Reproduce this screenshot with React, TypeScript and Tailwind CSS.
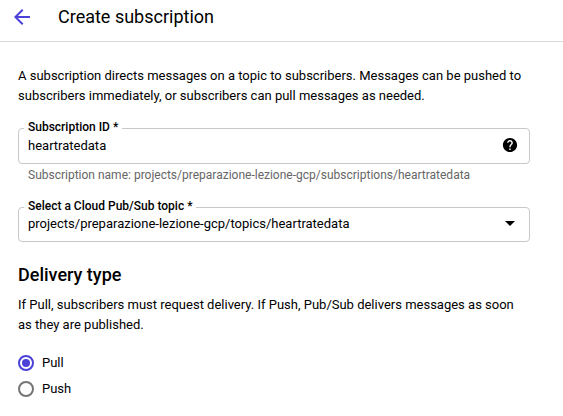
import React from "react";

function Field({ label, value, icon, className }: { label: string; value: string; icon: React.ReactNode; className: string }) {
  return (
    <div className={`relative flex w-[512px] items-start justify-between rounded border border-[#c8c8c8] pl-[9px] ${className}`}>
      <span className="absolute -top-[10px] left-[5px] bg-white px-1 text-[12px] leading-4 font-medium whitespace-nowrap">{label}</span>
      <span className="text-[13px] leading-5 whitespace-nowrap">{value}</span>
      {icon}
    </div>
  );
}

function Radio({ label, checked }: { label: string; checked?: boolean }) {
  return (
    <div className="flex h-[26px] items-center gap-2">
      <span className={`flex size-4 items-center justify-center rounded-full border-2 ${checked ? "border-[#4b40d8]" : "border-[#757575]"}`}>
        {checked && <span className="size-2 rounded-full bg-[#4b40d8]" />}
      </span>
      <span className="text-[13px] leading-5">{label}</span>
    </div>
  );
}

export default function App() {
  return (
    <div className="h-[416px] w-[563px] overflow-hidden bg-white font-['Roboto',sans-serif] text-black">
      <header className="flex h-[42px] items-center border-b border-[#dadada] pb-[7px] pl-[10px]">
        <svg viewBox="0 0 24 24" className="size-6 fill-[#4b40d8]">
          <path d="M20 11H7.83l5.59-5.59L12 4l-8 8 8 8 1.41-1.41L7.83 13H20v-2z" />
        </svg>
        <h1 className="ml-6 text-[18px] leading-6 font-normal">Create subscription</h1>
      </header>
      <main className="pt-6 pl-[18px]">
        <p className="mb-[22px] text-[13px] leading-5 whitespace-nowrap">
          A subscription directs messages on a topic to subscribers. Messages can be pushed to<br />
          subscribers immediately, or subscribers can pull messages as needed.
        </p>
        <Field
          label="Subscription ID *"
          className="h-9 pt-[7px] pr-[10px]"
          value="heartratedata"
          icon={
            <svg viewBox="-0.7 -0.7 25.4 25.4" className="size-[18px] fill-black">
              <path d="M12 2C6.48 2 2 6.48 2 12s4.48 10 10 10 10-4.48 10-10S17.52 2 12 2zm1 17h-2v-2h2v2zm2.07-7.75-.9.92C13.45 12.9 13 13.5 13 15h-2v-.5c0-1.1.45-2.1 1.17-2.83l1.24-1.26c.37-.36.59-.86.59-1.41 0-1.1-.9-2-2-2s-2 .9-2 2H8c0-2.21 1.79-4 4-4s4 1.79 4 4c0 .88-.36 1.68-.93 2.25z" />
            </svg>
          }
        />
        <p className="mt-[3px] mb-6 ml-[10px] text-[12px] leading-4 text-[#666666]">Subscription name: projects/preparazione-lezione-gcp/subscriptions/heartratedata</p>
        <Field
          label="Select a Cloud Pub/Sub topic *"
          className="h-[35px] pt-[6px] pr-[14px]"
          value="projects/preparazione-lezione-gcp/topics/heartratedata"
          icon={<svg viewBox="0 0 10 5" className="mt-[7px] h-[5px] w-[10px] fill-black"><path d="M0 0h10L5 5z" /></svg>}
        />
        <h2 className="mt-[21px] text-[18px] leading-6 font-medium">Delivery type</h2>
        <p className="mt-2 mb-[15px] text-[13px] leading-5 whitespace-nowrap">
          If Pull, subscribers must request delivery. If Push, Pub/Sub delivers messages as soon<br />
          as they are published.
        </p>
        <Radio label="Pull" checked />
        <Radio label="Push" />
      </main>
    </div>
  );
}
